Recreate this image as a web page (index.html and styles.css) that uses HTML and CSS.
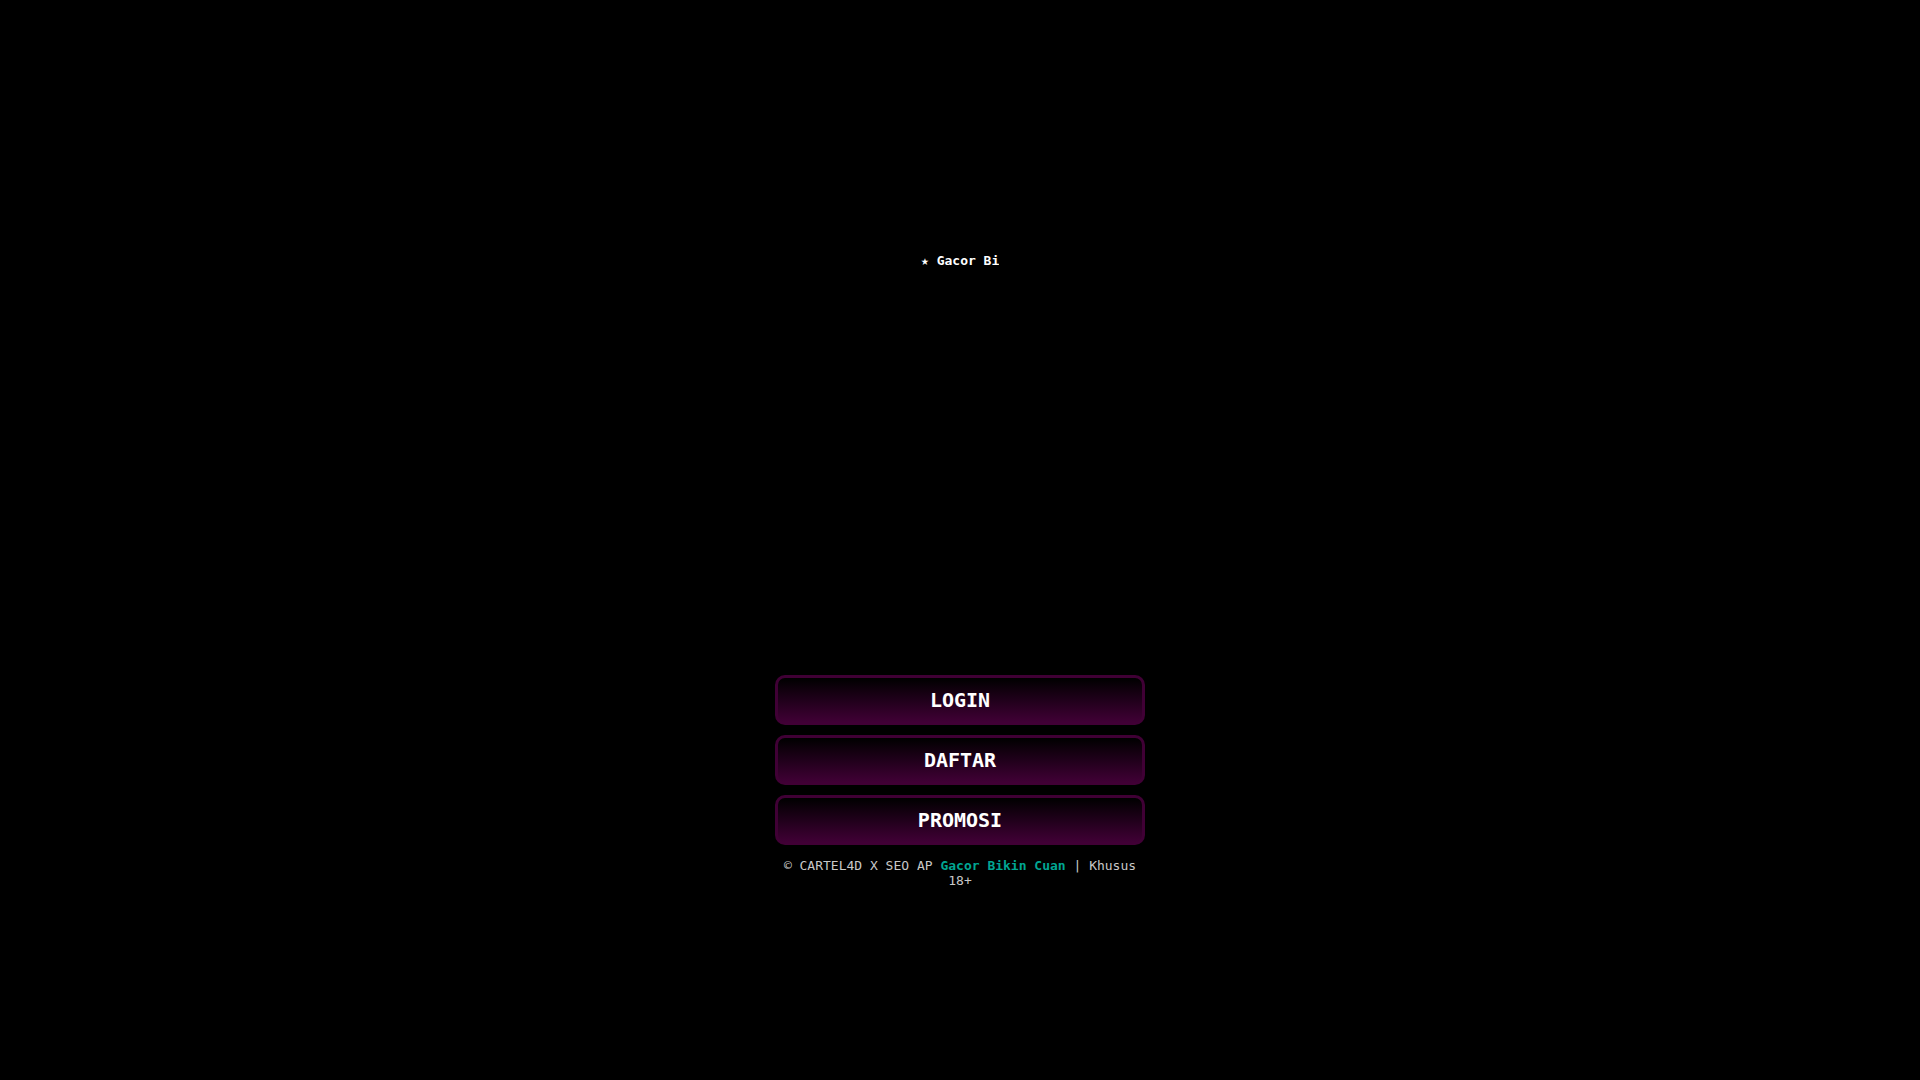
FILE: index.html
```
<!DOCTYPE html>
<html lang="id">
<head>
    <meta charset="UTF-8">
    <meta name="viewport" content="width=device-width, initial-scale=1.0">
    <title>CARTEL4D</title>
    <link rel="stylesheet" href="styles.css">
</head>
<body>
    <main class="container">
        <div class="ticker">★ Gacor Bikin Cuan ★</div>
        <nav class="links">
            <a href="#login" class="btn">LOGIN</a>
            <a href="#daftar" class="btn">DAFTAR</a>
            <a href="#promosi" class="btn">PROMOSI</a>
        </nav>
        <footer class="footer">
            © CARTEL4D X SEO AP <a href="#home">Gacor Bikin Cuan</a> | Khusus 18+
        </footer>
    </main>
</body>
</html>
```
FILE: styles.css
```
* {
    box-sizing: border-box;
}

body {
    margin: 0;
    min-height: 100vh;
    display: flex;
    justify-content: center;
    align-items: center;
    background-color: #000;
    color: #fff;
    font-family: "DejaVu Sans Mono", monospace;
}

.container {
    width: 100%;
    max-width: 370px;
    padding-top: 61px;
}

/* Narrow strip, the rest of the line is clipped */
.ticker {
    width: 78px;
    margin: 0 auto 407px;
    overflow: hidden;
    white-space: nowrap;
    font-size: 13px;
    font-weight: bold;
    line-height: 15px;
}

.links {
    display: flex;
    flex-direction: column;
    gap: 10px;
}

.btn {
    height: 50px;
    border: 3px solid #400035;
    border-radius: 10px;
    background: linear-gradient(to bottom, #000, #400035);
    color: #fff;
    font-size: 20px;
    font-weight: bold;
    line-height: 44px;
    text-align: center;
    text-decoration: none;
}

.btn:hover {
    background: #400035;
}

.footer {
    margin-top: 13px;
    color: #c8c8c8;
    font-size: 13px;
    line-height: 15px;
    text-align: center;
}

.footer a {
    color: #00a693;
    font-weight: bold;
    text-decoration: none;
}
```
